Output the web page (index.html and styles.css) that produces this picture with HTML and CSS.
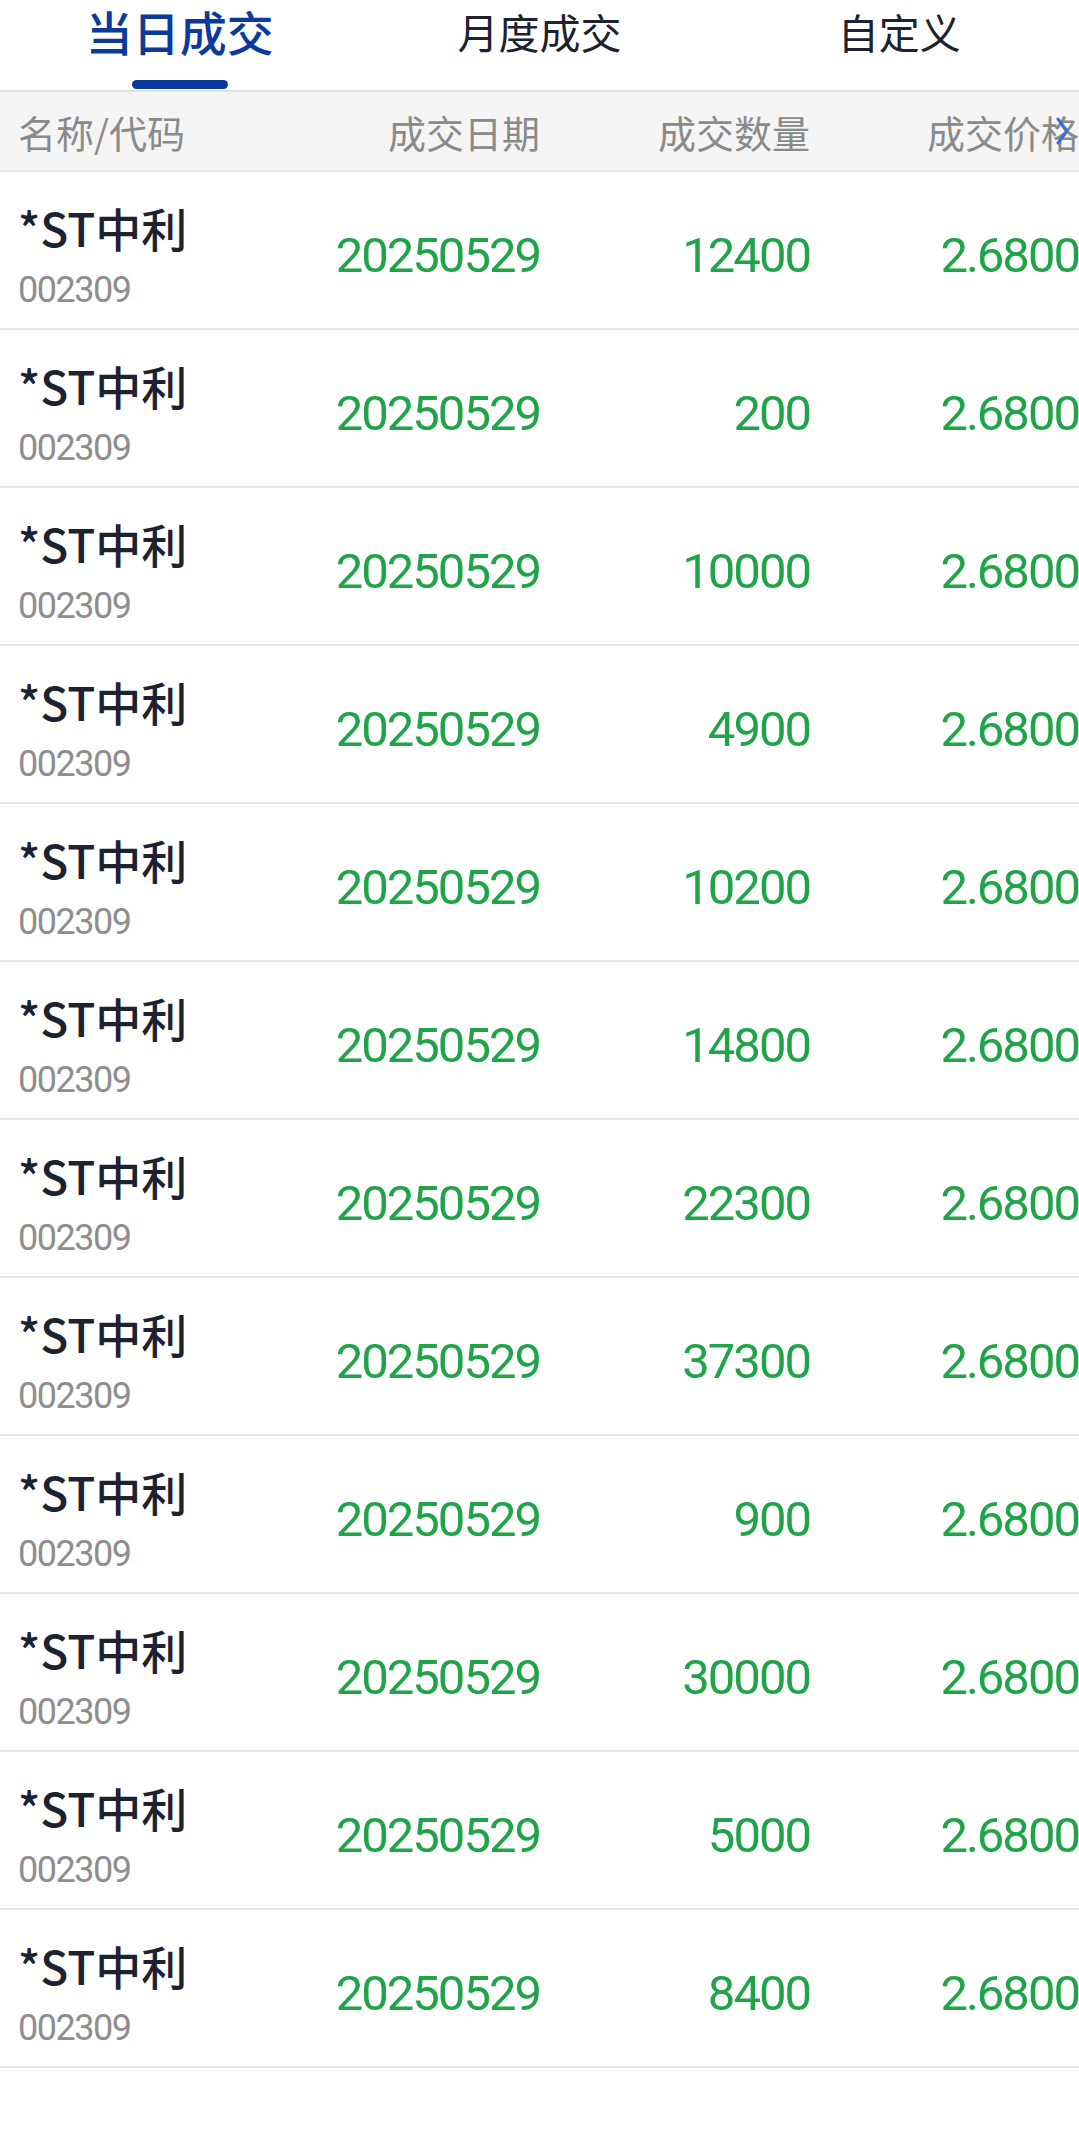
FILE: index.html
```html
<!DOCTYPE html>
<html lang="zh-CN">
<head>
    <meta charset="UTF-8">
    <meta name="viewport" content="width=device-width, initial-scale=1.0">
    <title>当日成交</title>
    <link rel="stylesheet" href="styles.css">
</head>
<body>
    <div class="tabs">
        <div class="tab active"><span class="tab-label">当日成交</span><span class="tab-line"></span></div>
        <div class="tab"><span class="tab-label">月度成交</span></div>
        <div class="tab"><span class="tab-label">自定义</span></div>
    </div>

    <div class="table-head">
        <div class="cell left">名称/代码</div>
        <div class="cell">成交日期</div>
        <div class="cell">成交数量</div>
        <div class="cell">成交价格</div>
        <svg class="more" width="14" height="30" viewBox="0 0 14 30">
            <polyline points="2,3 11,15 2,27" fill="none" stroke="#3a6fd6" stroke-width="3" stroke-linecap="round" stroke-linejoin="round"/>
        </svg>
    </div>

    <div class="list" id="list"></div>

    <script>
        // today's deals
        const deals = [12400, 200, 10000, 4900, 10200, 14800, 22300, 37300, 900, 30000, 5000, 8400];
        const list = document.getElementById('list');
        deals.forEach(function(qty) {
            const row = document.createElement('div');
            row.className = 'row';
            row.innerHTML =
                '<div class="cell left stock"><div class="name">*ST中利</div><div class="code">002309</div></div>' +
                '<div class="cell num">20250529</div>' +
                '<div class="cell num">' + qty + '</div>' +
                '<div class="cell num">2.6800</div>';
            list.appendChild(row);
        });
    </script>
</body>
</html>
```

FILE: styles.css
```css
body {
    margin: 0;
    background: #ffffff;
    font-family: "Noto Sans CJK SC", "Noto Sans", sans-serif;
    color: #1d2130;
}
.tabs {
    display: grid;
    grid-template-columns: repeat(3, 1fr);
    height: 90px;
}
.tab {
    display: flex;
    flex-direction: column;
    align-items: center;
    padding-top: 7px;
}
.tab-label {
    height: 48px;
    line-height: 48px;
    font-size: 41px;
    color: #1d2130;
}
.tab.active .tab-label {
    font-size: 47px;
    font-weight: 500;
    color: #0b3a9c;
}
.tab-line {
    width: 96px;
    height: 9px;
    margin-top: 25px;
    border-radius: 5px;
    background: #0a389e;
}
.table-head {
    position: relative;
    display: grid;
    grid-template-columns: 270px 270px 270px 269px;
    height: 78px;
    align-items: center;
    background: #f5f5f5;
    border-top: 2px solid #e2e2e2;
    border-bottom: 2px solid #e6e6e6;
    font-size: 38px;
    color: #8a8a8a;
    white-space: nowrap;
}
.cell {
    text-align: right;
}
.cell.left {
    text-align: left;
    padding-left: 18px;
}
.more {
    position: absolute;
    right: 9px;
    top: 24px;
}
.row {
    display: grid;
    grid-template-columns: 270px 270px 270px 269px;
    height: 156px;
    align-items: center;
    border-bottom: 2px solid #e6e6e6;
}
.stock {
    align-self: start;
    padding-top: 30px;
}
.name {
    font-size: 46px;
    font-weight: 500;
    line-height: 50px;
}
.code {
    margin-top: 18px;
    font-family: Roboto, "Liberation Sans", sans-serif;
    font-size: 36px;
    line-height: 40px;
    letter-spacing: -1.5px;
    color: #8e8e8e;
}
.num {
    margin-top: 10px;
    font-family: Roboto, "Liberation Sans", sans-serif;
    font-size: 49px;
    letter-spacing: -2px;
    color: #1fa448;
}
```
